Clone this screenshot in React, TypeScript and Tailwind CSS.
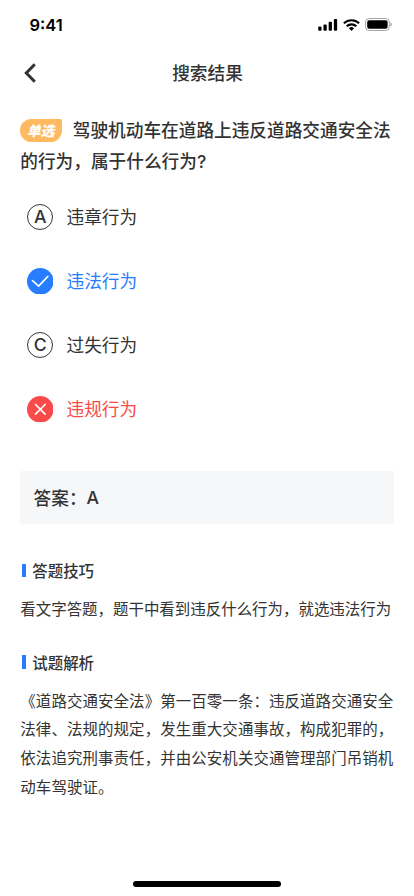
import type { ReactNode } from 'react'
import clsx from 'clsx'

type OptionState = 'default' | 'correct' | 'wrong'

const options: { key: string; label: string; state: OptionState }[] = [
  { key: 'A', label: '违章行为', state: 'default' },
  { key: 'B', label: '违法行为', state: 'correct' },
  { key: 'C', label: '过失行为', state: 'default' },
  { key: 'D', label: '违规行为', state: 'wrong' },
]

const explanation = [
  '《道路交通安全法》第一百零一条：违反道路交通安全',
  '法律、法规的规定，发生重大交通事故，构成犯罪的，',
  '依法追究刑事责任，并由公安机关交通管理部门吊销机',
  '动车驾驶证。',
]

export default function App() {
  return (
    <div className="flex h-[896px] w-[414px] flex-col overflow-hidden bg-white font-['Noto_Sans_CJK_SC',sans-serif] text-[#333]">
      <StatusBar />

      {/* Header */}
      <header className="grid h-12 grid-cols-[60px_1fr_60px] items-center">
        <button aria-label="返回" className="pl-6">
          <svg className="h-5 w-3" viewBox="0 0 12 20" fill="none" stroke="#333" strokeWidth="3">
            <path d="M10.8 1.3L2.3 10l8.5 8.7" />
          </svg>
        </button>
        <h1 className="pl-px text-center text-[17.66px] leading-6 font-medium">搜索结果</h1>
      </header>

      <main className="flex-1 px-[20.3px] pt-[18px]">
        {/* Question */}
        <div className="text-[17.66px] leading-[30.9px] font-medium whitespace-nowrap">
          <div className="flex items-center">
            <span className="mr-[10.5px] flex h-[22.5px] w-[42px] items-center justify-center rounded-l-[11.5px] rounded-tr-[2px] rounded-br-[11.5px] bg-[#ffb961] text-[13.8px] leading-none font-black text-white">
              <span className="-skew-x-12">单选</span>
            </span>
            驾驶机动车在道路上违反道路交通安全法
          </div>
          <div>
            的行为，属于什么行为<span className="font-['Inter']">?</span>
          </div>
        </div>

        {/* Options */}
        <ul className="mt-[7px]">
          {options.map((option) => (
            <li key={option.key} className="flex h-16 items-center pl-[6.6px]">
              <OptionMark letter={option.key} state={option.state} />
              <span
                className={clsx(
                  'ml-[13px] text-[17.66px] leading-6',
                  option.state === 'correct' && 'text-[#267dff]',
                  option.state === 'wrong' && 'text-[#f94a4a]',
                )}
              >
                {option.label}
              </span>
            </li>
          ))}
        </ul>

        {/* Answer */}
        <div className="mt-[30px] flex h-[53px] items-center bg-[#f5f7f9] pt-[2px] pl-[13.3px] text-[17.66px] font-medium">
          答案：<span className="font-['Inter']">A</span>
        </div>

        <Section title="答题技巧" className="mt-[34.7px]">
          <p>看文字答题，题干中看到违反什么行为，就选违法行为</p>
        </Section>
        <Section title="试题解析" className="mt-[27.5px]">
          {explanation.map((line) => (
            <p key={line} className="tracking-[0.09px]">
              {line}
            </p>
          ))}
        </Section>
      </main>

      {/* Home indicator */}
      <div className="mx-auto mb-[9px] h-[6px] w-[148px] rounded-full bg-black" />
    </div>
  )
}

function Section({ title, className, children }: { title: string; className?: string; children: ReactNode }) {
  return (
    <section className={className}>
      <h2 className="flex h-6 items-center text-[15.46px] font-medium">
        <span className="mr-[6.7px] ml-[1.7px] h-[13.5px] w-[3.6px] bg-[#267dff]" />
        {title}
      </h2>
      <div className="mt-[11.5px] text-[15.46px] leading-[28.7px] whitespace-nowrap">{children}</div>
    </section>
  )
}

function OptionMark({ letter, state }: { letter: string; state: OptionState }) {
  if (state === 'correct') {
    return (
      <svg className="h-[26.6px] w-[26.6px]" viewBox="0 0 27 27" fill="none" stroke="#fff" strokeWidth="1.6">
        <circle cx="13.5" cy="13.5" r="13.5" fill="#267dff" stroke="none" />
        <path d="M5.6 12.8l6.2 5.6L21.2 8.5" strokeLinecap="round" strokeLinejoin="round" />
      </svg>
    )
  }
  if (state === 'wrong') {
    return (
      <svg className="h-[26.6px] w-[26.6px]" viewBox="0 0 27 27" fill="none" stroke="#fff" strokeWidth="1.7">
        <circle cx="13.5" cy="13.5" r="13.5" fill="#f94a4a" stroke="none" />
        <path d="M8.6 8.6l9.8 9.8M18.4 8.6L8.6 18.4" strokeLinecap="round" />
      </svg>
    )
  }
  return (
    <span className="flex h-[26.6px] w-[26.6px] items-center justify-center rounded-full border border-[#333] font-['Inter'] text-[17.66px] leading-none font-medium">
      {letter}
    </span>
  )
}

function StatusBar() {
  return (
    <div className="flex h-[49px] items-center justify-between pr-[22.5px] pl-[29.5px] text-black">
      <span className="pt-px font-['Inter'] text-[16.5px] font-semibold">9:41</span>
      <div className="flex items-center gap-[5px]">
        <svg className="h-3 w-[19.5px]" viewBox="0 0 19 12" fill="currentColor">
          <rect x="0" y="7.6" width="3.3" height="4.2" rx="1" />
          <rect x="5.2" y="5.4" width="3.3" height="6.4" rx="1" />
          <rect x="10.4" y="2.8" width="3.3" height="9" rx="1" />
          <rect x="15.6" y="0" width="3.3" height="11.8" rx="1" />
        </svg>
        <svg className="h-3 w-[17px]" viewBox="0 0 17 12" fill="none" stroke="currentColor" strokeWidth="2.1">
          <path d="M.9 4.3a10.9 10.9 0 0 1 15.2 0" />
          <path d="M3.7 7.3a6.9 6.9 0 0 1 9.6 0" />
          <path d="M8.5 11.9L5.9 9.3a3.8 3.8 0 0 1 5.2 0z" fill="currentColor" stroke="none" />
        </svg>
        <svg className="h-[13px] w-[27px]" viewBox="0 0 27 13" fill="none">
          <rect x=".5" y=".5" width="23.8" height="12" rx="3.6" stroke="#000" strokeOpacity=".35" />
          <rect x="2.2" y="2.2" width="20.4" height="8.6" rx="2" fill="#000" />
          <path d="M25.4 4.5v4c.8-.3 1.3-1.1 1.3-2s-.5-1.7-1.3-2z" fill="#000" fillOpacity=".4" />
        </svg>
      </div>
    </div>
  )
}
